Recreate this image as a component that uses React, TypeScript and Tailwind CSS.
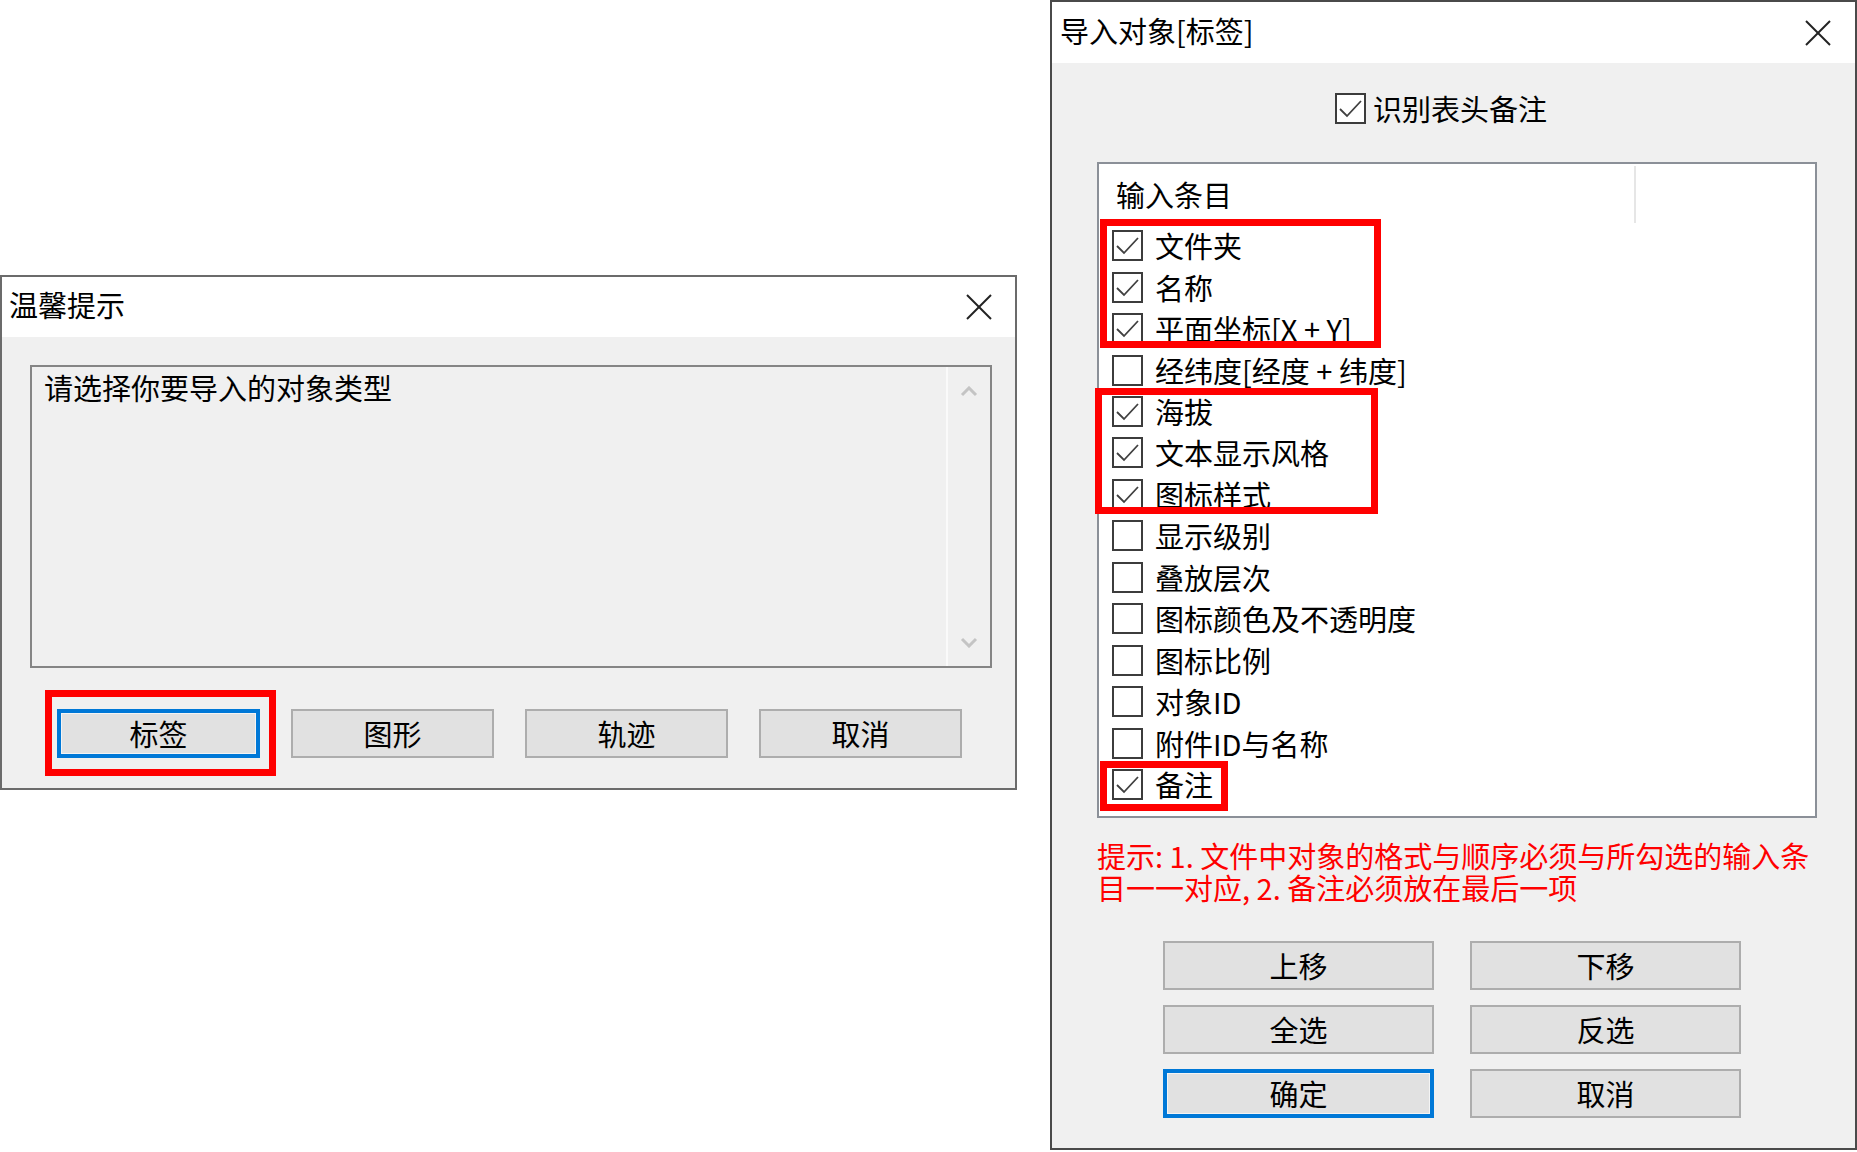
const font = "font-['Noto_Sans_CJK_SC','Liberation_Sans',sans-serif]";

const CloseX = () => (
  <svg width="26" height="26" viewBox="0 0 26 26">
    <line x1="1" y1="1" x2="25" y2="25" stroke="#222" strokeWidth="2" />
    <line x1="25" y1="1" x2="1" y2="25" stroke="#222" strokeWidth="2" />
  </svg>
);

const CheckBox = ({ checked }: { checked: boolean }) => (
  <span className="w-[31px] h-[31px] shrink-0 border-2 border-[#3c3c3c] bg-white flex items-center justify-center">
    {checked && (
      <svg width="27" height="27" viewBox="0 0 27 27">
        <polyline points="3,14 10,21 24,6" fill="none" stroke="#404040" strokeWidth="1.8" />
      </svg>
    )}
  </span>
);

const Button = ({ label, primary }: { label: string; primary?: boolean }) => (
  <div
    className={
      primary
        ? 'h-[49px] flex items-center justify-center bg-[#e1e1e1] border-[4px] border-[#0078d7] shadow-[inset_0_0_0_1px_#f4f4f4] text-[29px] leading-none text-black'
        : 'h-[49px] flex items-center justify-center bg-[#e1e1e1] border-2 border-[#adadad] text-[29px] leading-none text-black'
    }
  >
    {label}
  </div>
);

const items = [
  { label: '文件夹', checked: true },
  { label: '名称', checked: true },
  { label: '平面坐标[X + Y]', checked: true },
  { label: '经纬度[经度 + 纬度]', checked: false },
  { label: '海拔', checked: true },
  { label: '文本显示风格', checked: true },
  { label: '图标样式', checked: true },
  { label: '显示级别', checked: false },
  { label: '叠放层次', checked: false },
  { label: '图标颜色及不透明度', checked: false },
  { label: '图标比例', checked: false },
  { label: '对象ID', checked: false },
  { label: '附件ID与名称', checked: false },
  { label: '备注', checked: true },
];

const TipDialog = () => (
  <div className="relative mt-[275px] w-[1017px] h-[515px] shrink-0 border-2 border-[#6b6b6b] bg-[#f0f0f0] flex flex-col">
    <div className="h-[60px] bg-white flex items-center justify-between pl-[7px] pr-[23px]">
      <span className="text-[29px] leading-none text-black pb-[6px]">温馨提示</span>
      <CloseX />
    </div>
    <div className="flex flex-col pl-[28px] pt-[28px]">
      <div className="w-[962px] h-[303px] border-2 border-[#858585] bg-[#f0f0f0] flex">
        <div className="flex-1 pl-[12px] pt-[2px] text-[29px] leading-[36px] text-black">请选择你要导入的对象类型</div>
        <div className="w-[44px] border-l-2 border-[#fafafa] flex flex-col items-center justify-between pt-[19px] pb-[18px]">
          <svg width="18" height="11" viewBox="0 0 18 11">
            <polyline points="2,9 9,2 16,9" fill="none" stroke="#c4c4c4" strokeWidth="3" />
          </svg>
          <svg width="18" height="11" viewBox="0 0 18 11">
            <polyline points="2,2 9,9 16,2" fill="none" stroke="#c4c4c4" strokeWidth="3" />
          </svg>
        </div>
      </div>
      <div className="mt-[41px] pl-[27px] flex gap-[31px]">
        <div className="w-[203px]"><Button label="标签" primary /></div>
        <div className="w-[203px]"><Button label="图形" /></div>
        <div className="w-[203px]"><Button label="轨迹" /></div>
        <div className="w-[203px]"><Button label="取消" /></div>
      </div>
    </div>
    <div className="absolute left-[43px] top-[413px] w-[231px] h-[86px] border-[7px] border-[#ff0000]" />
  </div>
);

const ImportDialog = () => (
  <div className="ml-[33px] w-[807px] h-[1150px] shrink-0 border-2 border-[#4a4a4a] bg-[#f0f0f0] flex flex-col">
    <div className="h-[61px] bg-white flex items-center justify-between pl-[8px] pr-[24px]">
      <span className="text-[29px] leading-none text-black pb-[4px]">导入对象[标签]</span>
      <CloseX />
    </div>
    <div className="mt-[30px] pl-[283px] flex items-center gap-[7px]">
      <CheckBox checked />
      <span className="text-[29px] leading-none text-black">识别表头备注</span>
    </div>
    <div className="relative mt-[38px] ml-[45px] w-[720px] h-[656px] border-2 border-[#8b9098] bg-white">
      <div className="h-[61px] flex">
        <div className="w-[537px] pl-[17px] flex items-center text-[29px] leading-none text-black border-r-2 border-[#e6e6e6] mt-[2px] mb-[2px]">
          输入条目
        </div>
      </div>
      <div className="flex flex-col">
        {items.map((item) => (
          <div key={item.label} className="h-[41.46px] flex items-center pl-[13px] gap-[12px]">
            <CheckBox checked={item.checked} />
            <span className="text-[29px] leading-none text-black whitespace-nowrap">{item.label}</span>
          </div>
        ))}
      </div>
      <div className="absolute left-[1px] top-[55px] w-[281px] h-[129px] border-[7px] border-[#ff0000]" />
      <div className="absolute left-[-4px] top-[224px] w-[283px] h-[126px] border-[7px] border-[#ff0000]" />
      <div className="absolute left-[1px] top-[597px] w-[128px] h-[50px] border-[7px] border-[#ff0000]" />
    </div>
    <div className="mt-[21px] ml-[45px] text-[29px] leading-[32px] text-[#ff0000] whitespace-nowrap">
      <div className="h-[32px]">提示: 1. 文件中对象的格式与顺序必须与所勾选的输入条</div>
      <div className="h-[32px]">目一一对应, 2. 备注必须放在最后一项</div>
    </div>
    <div className="mt-[38px] pl-[111px] grid grid-cols-[271px_271px] gap-x-[36px] gap-y-[15px]">
      <Button label="上移" />
      <Button label="下移" />
      <Button label="全选" />
      <Button label="反选" />
      <Button label="确定" primary />
      <Button label="取消" />
    </div>
  </div>
);

export default function App() {
  return (
    <div className={`w-[1857px] h-[1152px] bg-white flex items-start ${font}`}>
      <TipDialog />
      <ImportDialog />
    </div>
  );
}
